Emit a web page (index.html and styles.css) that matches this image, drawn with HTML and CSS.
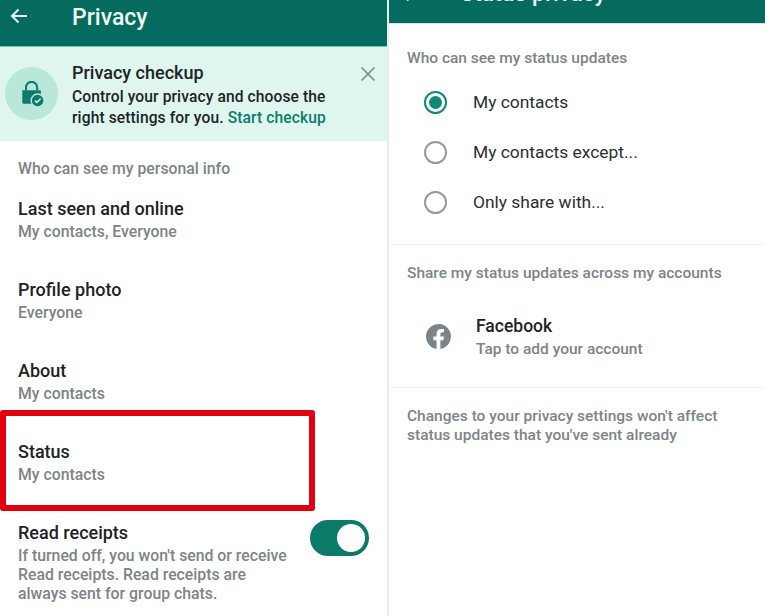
FILE: index.html
```html
<!DOCTYPE html>
<html lang="en">
<head>
<meta charset="utf-8">
<title>Privacy</title>
<link rel="stylesheet" href="styles.css">
</head>
<body>
<div class="screens">
  <section class="left">
    <header class="bar bar-main">
      <svg class="back" viewBox="0 0 20 20" width="20" height="20"><path d="M18 10H3M9.500 3.500 3 10l6.500 6.500" fill="none" stroke="#e8f5f2" stroke-width="2"/></svg>
      <h1 class="bar-title">Privacy</h1>
    </header>
    <div class="banner">
      <div class="lock-circle">
        <svg viewBox="0 0 24 28" width="24" height="28"><path d="M5 10V7a6 6 0 0 1 12 0v3" fill="none" stroke="#0b7a68" stroke-width="2.200"/><path d="M1 10h20v13a1.500 1.500 0 0 1-1.500 1.500h-17A1.500 1.500 0 0 1 1 23z" fill="#0b7a68"/><circle cx="17.500" cy="21" r="7" fill="#0b7a68" stroke="#b9e8db" stroke-width="1.500"/><path d="m14.500 21 2.200 2.200 4-4.200" fill="none" stroke="#d8f5ec" stroke-width="1.600"/></svg>
      </div>
      <div class="banner-text">
        <div class="banner-title">Privacy checkup</div>
        <div class="banner-body">Control your privacy and choose the<br>right settings for you. <span class="link">Start checkup</span></div>
      </div>
      <svg class="close" viewBox="0 0 16 16" width="16" height="16"><path d="M1.500 1.500l13 13M14.500 1.500l-13 13" stroke="#7f8f8b" stroke-width="1.700" fill="none"/></svg>
    </div>
    <div class="section-label left-label">Who can see my personal info</div>
    <div class="rows">
      <div class="row"><div class="row-title">Last seen and online</div><div class="row-sub">My contacts, Everyone</div></div>
      <div class="row"><div class="row-title">Profile photo</div><div class="row-sub">Everyone</div></div>
      <div class="row"><div class="row-title">About</div><div class="row-sub">My contacts</div></div>
      <div class="row row-marked"><div class="row-title">Status</div><div class="row-sub">My contacts</div><div class="marker"></div></div>
      <div class="row-toggle">
        <div>
          <div class="row-title">Read receipts</div>
          <div class="row-desc">If turned off, you won't send or receive<br>Read receipts. Read receipts are<br>always sent for group chats.</div>
        </div>
        <div class="switch"><span class="knob"></span></div>
      </div>
    </div>
  </section>
  <section class="right">
    <header class="bar bar-clipped">
      <svg class="back-r" viewBox="0 0 20 20" width="20" height="20"><path d="M18 10H3M9.500 3.500 3 10l6.500 6.500" fill="none" stroke="#e8f5f2" stroke-width="2"/></svg>
      <h1 class="bar-title">Status privacy</h1>
    </header>
    <div class="section-label right-first">Who can see my status updates</div>
    <div class="radios">
      <div class="radio-row"><span class="radio on"><span class="dot"></span></span><span class="radio-text">My contacts</span></div>
      <div class="radio-row"><span class="radio"></span><span class="radio-text">My contacts except...</span></div>
      <div class="radio-row"><span class="radio"></span><span class="radio-text">Only share with...</span></div>
    </div>
    <div class="rule"></div>
    <div class="section-label share-label">Share my status updates across my accounts</div>
    <div class="fb-row">
      <svg class="fb" viewBox="0 0 24 24" width="25" height="25"><path fill="#7b8489" d="M24 12a12 12 0 1 0-13.900 11.900v-8.400H7.100V12h3V9.400c0-3 1.800-4.700 4.500-4.700 1.300 0 2.700.2 2.700.2v3h-1.500c-1.500 0-2 .9-2 1.900V12h3.400l-.5 3.500h-2.900v8.400A12 12 0 0 0 24 12z"/></svg>
      <div>
        <div class="row-title fb-title">Facebook</div>
        <div class="row-sub fb-sub">Tap to add your account</div>
      </div>
    </div>
    <div class="rule rule-lower"></div>
    <div class="note">Changes to your privacy settings won't affect<br>status updates that you've sent already</div>
  </section>
</div>
</body>
</html>
```
FILE: styles.css
```css
* { box-sizing: border-box; }
html, body { margin: 0; padding: 0; }
body {
  width: 765px;
  height: 616px;
  overflow: hidden;
  background: #fff;
  font-family: Roboto, "Liberation Sans", sans-serif;
  font-weight: 500;
  color: #1d2326;
}
.screens { display: flex; height: 616px; }
.left { width: 387px; flex: none; overflow: hidden; }
.right { flex: 1; border-left: 2px solid #e9ecec; overflow: hidden; }

.bar { background: #046b5e; display: flex; color: #eef8f5; }
.bar-main { height: 47px; padding: 0 0 0 9px; align-items: flex-start; border-bottom: 1px solid #7fc4b3; }
.back { margin-top: 6px; flex: none; }
.bar-title { margin: 0; font-size: 23px; font-weight: 500; line-height: 26px; }
.bar-main .bar-title { margin: 5px 0 0 43px; }
.bar-clipped { height: 24px; align-items: flex-end; padding-left: 10px; border-bottom: 1px solid #cfe8e2; }
.back-r { flex: none; margin-bottom: 19px; }
.bar-clipped .bar-title { margin: 0 0 16px 41px; flex: none; }

.banner { height: 94px; background: #dff6ee; display: flex; position: relative; padding: 20px 0 0 5px; }
.lock-circle { width: 53px; height: 53px; border-radius: 50%; background: #b9e8db; display: flex; align-items: center; justify-content: center; flex: none; padding-left: 2px; }
.lock-circle svg { width: 23px; height: 26px; }
.banner-text { margin-left: 14px; margin-top: -5px; }
.banner-title { font-size: 18px; line-height: 22px; }
.banner-body { font-size: 15.600px; line-height: 20.500px; margin-top: 3px; letter-spacing: .1px; }
.link { color: #0c7c6a; }
.close { position: absolute; top: 19px; right: 11px; }

.section-label { color: #7d8488; font-size: 15.500px; line-height: 18px; }
.left-label { padding: 19px 0 0 18px; font-size: 15.800px; }

.rows { padding-top: 15px; }
.row { height: 81px; padding: 4px 0 0 18px; position: relative; }
.row-title { font-size: 18px; line-height: 24px; color: #1d2326; }
.row-sub { font-size: 15.800px; line-height: 20px; color: #7d8488; margin-top: 1px; }
.marker { position: absolute; left: 0; top: -26px; width: 315px; height: 101px; border: 6px solid #e2000f; border-radius: 3px; }
.row-toggle { display: flex; justify-content: space-between; padding: 0 18px 0 18px; margin-top: 4px; }
.row-desc { font-size: 15.800px; line-height: 19px; color: #7d8488; margin-top: 1px; }
.switch { width: 59px; height: 36px; border-radius: 18px; background: #0b7a68; position: relative; flex: none; margin-top: -1px; }
.knob { position: absolute; right: 4px; top: 4px; width: 28px; height: 28px; border-radius: 50%; background: #fff; }

.right-first { padding: 25px 0 0 18px; }
.radios { padding: 10px 0 0 35px; }
.radio-row { height: 50px; display: flex; align-items: center; }
.radio { width: 23px; height: 23px; border-radius: 50%; border: 2px solid #949a9c; display: flex; align-items: center; justify-content: center; flex: none; }
.radio.on { border-color: #0f8a76; }
.dot { width: 13px; height: 13px; border-radius: 50%; background: #0f8a76; }
.radio-text { font-size: 17.400px; font-weight: 400; margin-left: 26px; color: #2a3033; }
.rule { height: 1px; background: #f1f3f3; margin-top: 17px; }
.rule-lower { margin-top: 28px; }
.share-label { padding: 19px 0 0 18px; }
.fb-row { display: flex; align-items: center; padding: 32px 0 0 37px; }
.fb { margin-right: 25px; flex: none; }
.fb-title { font-size: 17.500px; }
.fb-sub { font-size: 15.500px; }
.note { padding: 19px 0 0 18px; color: #7d8488; font-size: 15.500px; line-height: 18.500px; }
```
